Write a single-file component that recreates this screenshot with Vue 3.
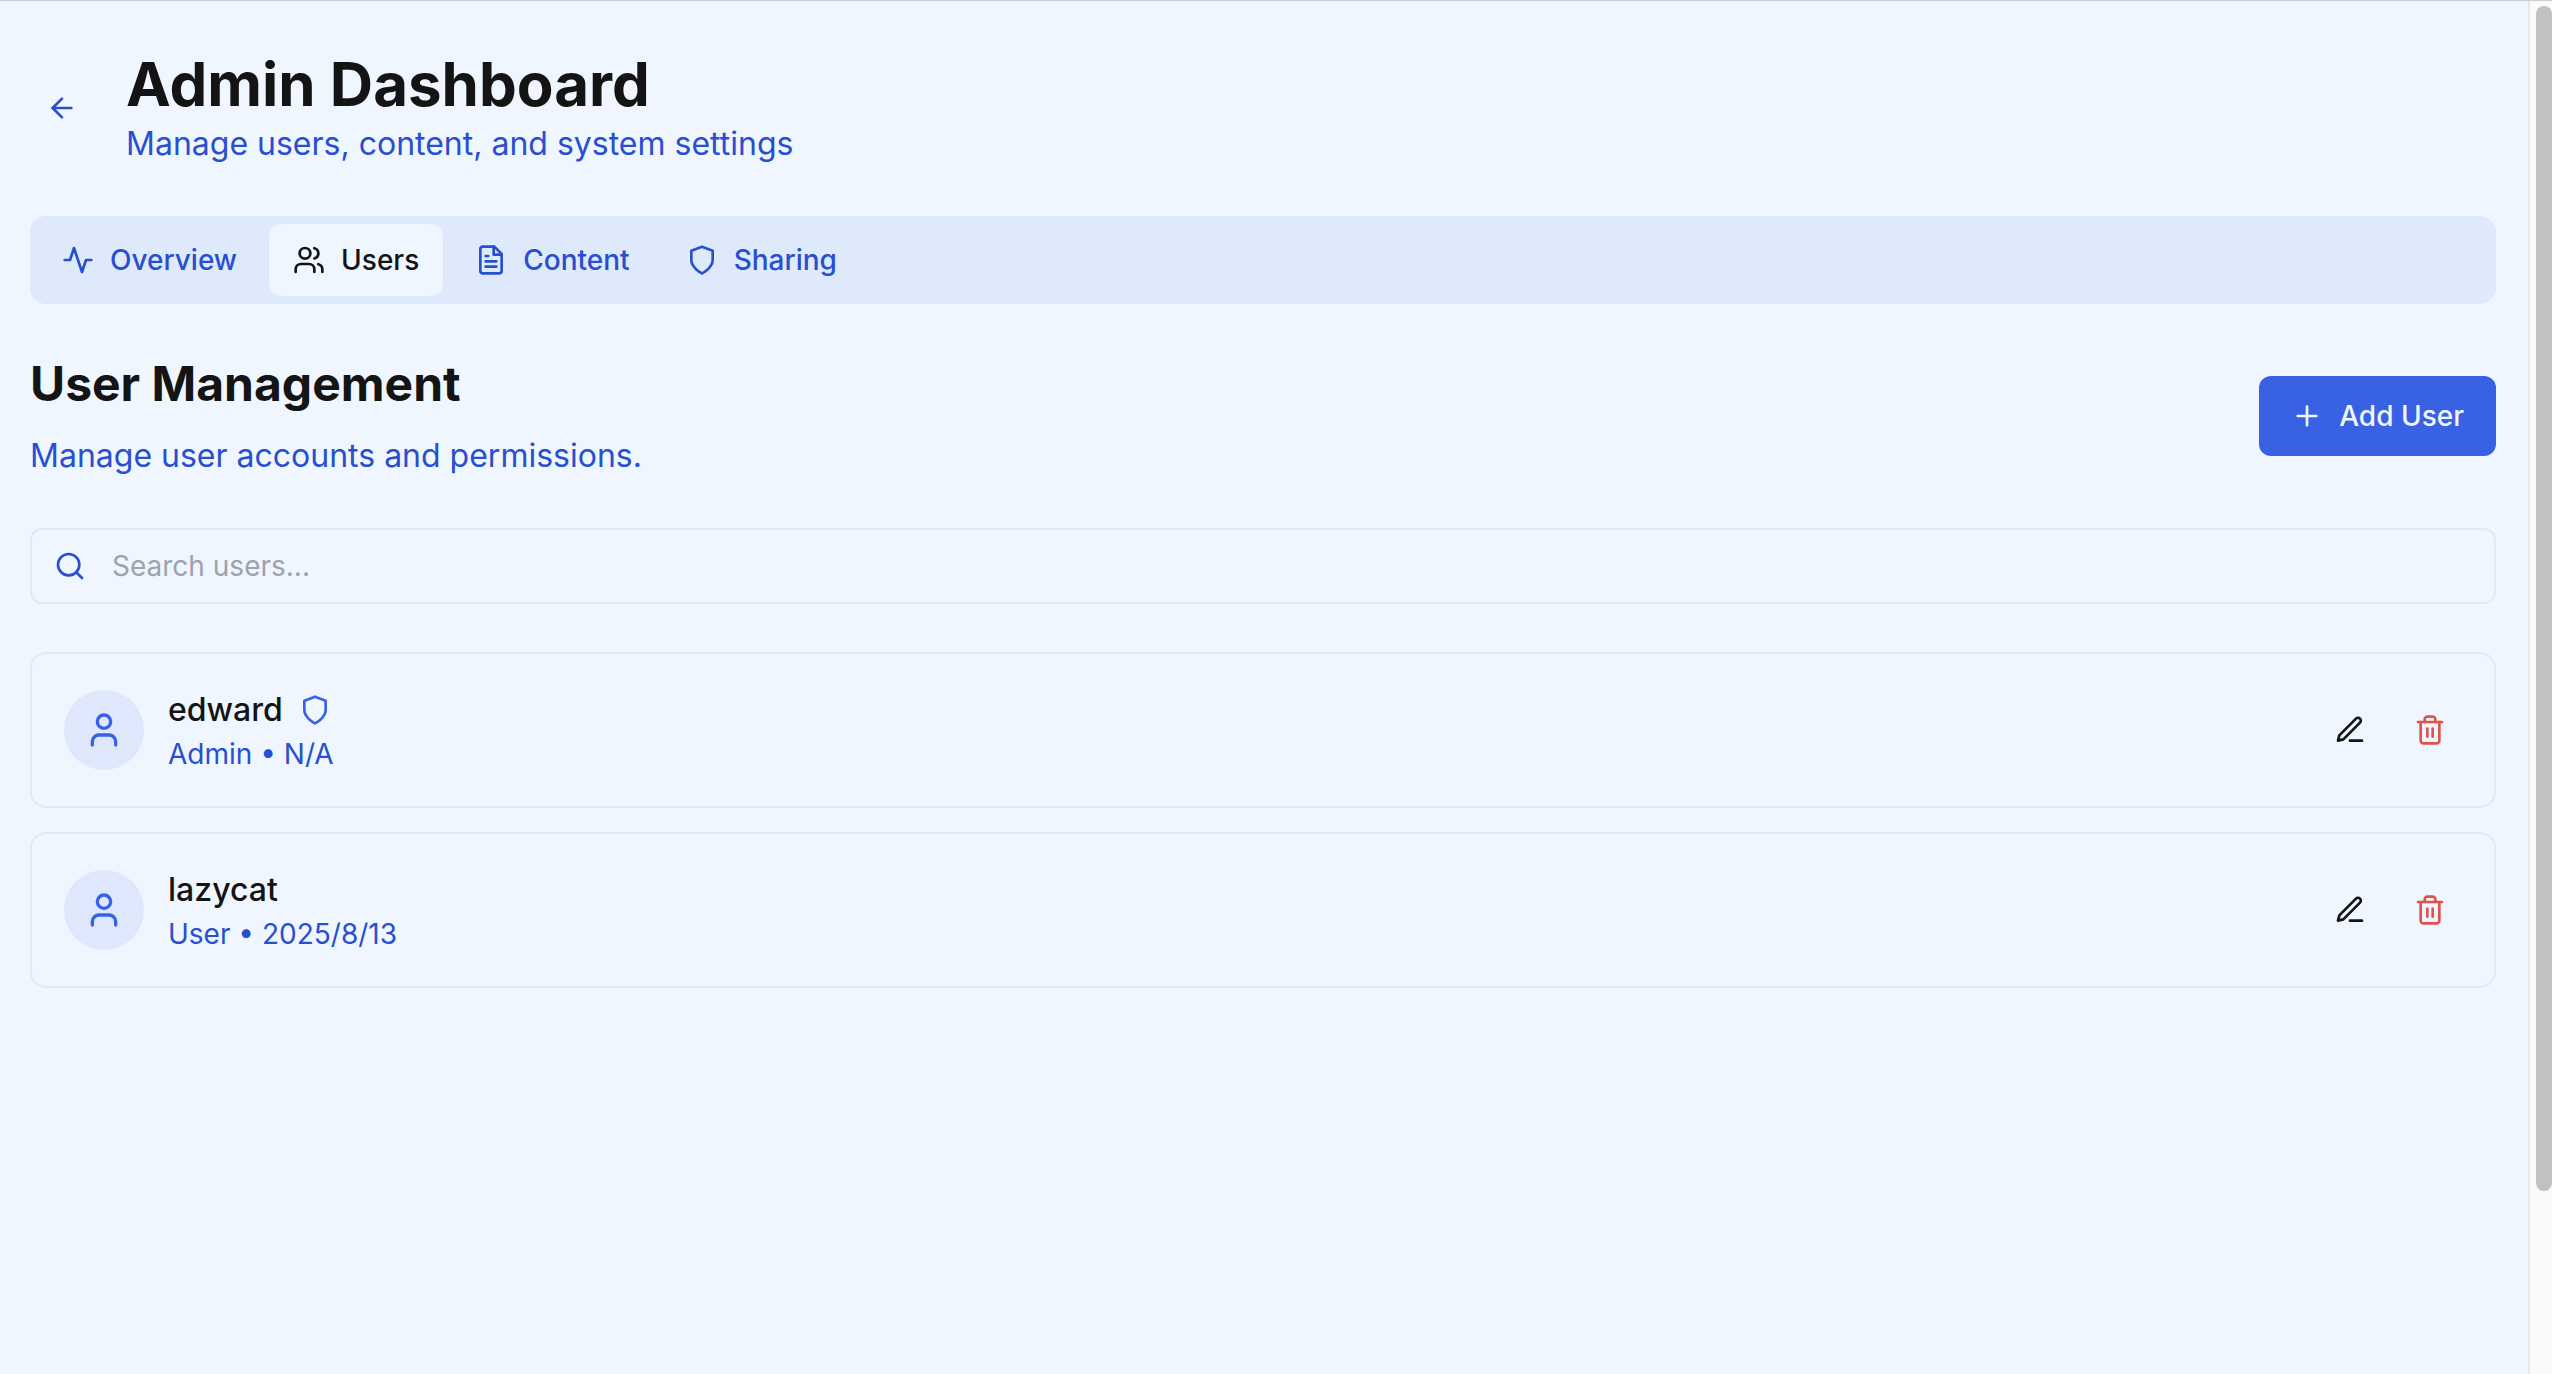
<template>
  <div class="window">
    <main class="page">
      <header class="header">
        <button class="icon-button back" type="button" aria-label="Back">
          <svg class="icon" viewBox="0 0 24 24">
            <path v-for="d in icons.arrowLeft" :key="d" :d="d" />
          </svg>
        </button>
        <div>
          <h1>Admin Dashboard</h1>
          <p class="lead">Manage users, content, and system settings</p>
        </div>
      </header>

      <nav class="tabs">
        <button
          v-for="tab in tabs"
          :key="tab.name"
          class="tab"
          :class="{ active: tab.name === activeTab }"
          type="button"
          @click="activeTab = tab.name"
        >
          <svg class="icon" viewBox="0 0 24 24">
            <path v-for="d in icons[tab.icon]" :key="d" :d="d" />
          </svg>
          {{ tab.name }}
        </button>
      </nav>

      <section class="section-head">
        <div>
          <h2>User Management</h2>
          <p class="lead">Manage user accounts and permissions.</p>
        </div>
        <button class="add" type="button">
          <svg class="icon" viewBox="0 0 24 24">
            <path v-for="d in icons.plus" :key="d" :d="d" />
          </svg>
          Add User
        </button>
      </section>

      <label class="search">
        <svg class="icon" viewBox="0 0 24 24">
          <path v-for="d in icons.search" :key="d" :d="d" />
        </svg>
        <input
          v-model="query"
          type="text"
          placeholder="Search users..."
          aria-label="Search users"
        />
      </label>

      <ul class="users">
        <li v-for="user in filteredUsers" :key="user.name" class="user">
          <div class="avatar">
            <svg class="icon large" viewBox="0 0 24 24">
              <path v-for="d in icons.user" :key="d" :d="d" />
            </svg>
          </div>
          <div class="info">
            <div class="name">
              {{ user.name }}
              <svg v-if="user.role === 'Admin'" class="icon" viewBox="0 0 24 24">
                <path v-for="d in icons.shield" :key="d" :d="d" />
              </svg>
            </div>
            <div class="meta">{{ user.role }} • {{ user.created }}</div>
          </div>
          <div class="actions">
            <button class="icon-button" type="button" aria-label="Edit user">
              <svg class="icon" viewBox="0 0 24 24">
                <path v-for="d in icons.edit" :key="d" :d="d" />
              </svg>
            </button>
            <button
              class="icon-button danger"
              type="button"
              aria-label="Delete user"
              @click="removeUser(user)"
            >
              <svg class="icon" viewBox="0 0 24 24">
                <path v-for="d in icons.trash" :key="d" :d="d" />
              </svg>
            </button>
          </div>
        </li>
      </ul>
    </main>
    <div class="scrollbar">
      <div class="thumb"></div>
    </div>
  </div>
</template>

<script setup>
import { ref, computed } from "vue";

const icons = {
  arrowLeft: ["m12 19-7-7 7-7", "M19 12H5"],
  activity: ["M22 12h-4l-3 9L9 3l-3 9H2"],
  users: [
    "M16 21v-2a4 4 0 0 0-4-4H6a4 4 0 0 0-4 4v2",
    "M5 7a4 4 0 1 0 8 0a4 4 0 1 0-8 0",
    "M22 21v-2a4 4 0 0 0-3-3.87",
    "M16 3.13a4 4 0 0 1 0 7.75",
  ],
  file: [
    "M14.5 2H6a2 2 0 0 0-2 2v16a2 2 0 0 0 2 2h12a2 2 0 0 0 2-2V7.5L14.5 2z",
    "M14 2v6h6",
    "M10 9H8",
    "M16 13H8",
    "M16 17H8",
  ],
  shield: ["M12 22s8-4 8-10V5l-8-3-8 3v7c0 6 8 10 8 10"],
  plus: ["M5 12h14", "M12 5v14"],
  search: ["M3 11a8 8 0 1 0 16 0a8 8 0 1 0-16 0", "m21 21-4.3-4.3"],
  user: [
    "M19 21v-2a4 4 0 0 0-4-4H9a4 4 0 0 0-4 4v2",
    "M8 7a4 4 0 1 0 8 0a4 4 0 1 0-8 0",
  ],
  edit: ["M12 20h9", "M16.5 3.5a2.12 2.12 0 0 1 3 3L7 19l-4 1 1-4Z"],
  trash: [
    "M3 6h18",
    "M19 6v14c0 1-1 2-2 2H7c-1 0-2-1-2-2V6",
    "M8 6V4c0-1 1-2 2-2h4c1 0 2 1 2 2v2",
    "M10 11v6",
    "M14 11v6",
  ],
};

const tabs = [
  { name: "Overview", icon: "activity" },
  { name: "Users", icon: "users" },
  { name: "Content", icon: "file" },
  { name: "Sharing", icon: "shield" },
];

const activeTab = ref("Users");
const query = ref("");
const users = ref([
  { name: "edward", role: "Admin", created: "N/A" },
  { name: "lazycat", role: "User", created: "2025/8/13" },
]);

const filteredUsers = computed(() =>
  users.value.filter((user) => user.name.includes(query.value.trim()))
);

const removeUser = (user) => {
  users.value = users.value.filter((other) => other.name !== user.name);
};
</script>

<style>
body {
  margin: 0;
  background: #eff6ff;
}
</style>

<style scoped>
.window {
  display: flex;
  box-sizing: border-box;
  min-height: 100vh;
  border-top: 1px solid #c8ced6;
  background: #eff6ff;
  color: #141414;
  font-family: Inter, "Liberation Sans", sans-serif;
  font-size: 28px;
  line-height: 40px;
}

.page {
  flex: 1;
  padding: 47px 32px 48px 30px;
}

h1,
h2,
p,
ul {
  margin: 0;
  padding: 0;
}

button,
input {
  font: inherit;
  color: inherit;
  border: 0;
  background: none;
  padding: 0;
}

button {
  cursor: pointer;
}

.icon {
  display: block;
  flex: none;
  width: 32px;
  height: 32px;
  fill: none;
  stroke: currentColor;
  stroke-width: 2;
  stroke-linecap: round;
  stroke-linejoin: round;
}

.icon.large {
  width: 40px;
  height: 40px;
}

.icon-button {
  display: flex;
  align-items: center;
  justify-content: center;
  width: 64px;
  height: 64px;
  border-radius: 12px;
}

.header {
  display: flex;
  align-items: center;
  gap: 32px;
}

.back {
  color: #294fd1;
}

h1 {
  font-size: 60px;
  line-height: 72px;
  font-weight: 700;
}

.lead {
  color: #294fd1;
  font-size: 32px;
  line-height: 48px;
}

.tabs {
  display: flex;
  gap: 8px;
  margin-top: 48px;
  padding: 8px;
  border-radius: 16px;
  background: #dee9fc;
}

.tab {
  display: flex;
  align-items: center;
  gap: 16px;
  padding: 16px 24px;
  border-radius: 12px;
  color: #294fd1;
  font-weight: 500;
}

.tab.active {
  background: #eff6ff;
  color: #141414;
}

.section-head {
  display: flex;
  align-items: center;
  justify-content: space-between;
  margin-top: 48px;
}

h2 {
  margin-bottom: 16px;
  font-size: 48px;
  line-height: 64px;
  font-weight: 700;
}

.add {
  display: flex;
  align-items: center;
  gap: 16px;
  padding: 20px 32px;
  border-radius: 12px;
  background: #3861e4;
  color: #eff6ff;
  font-weight: 500;
}

.search {
  display: flex;
  align-items: center;
  gap: 26px;
  margin-top: 48px;
  padding: 0 22px;
  border: 2px solid #dee9fc;
  border-radius: 12px;
  color: #294fd1;
}

.search input {
  flex: 1;
  height: 72px;
  color: #141414;
  outline: none;
}

.search input::placeholder {
  color: #9ca3af;
}

.users {
  display: flex;
  flex-direction: column;
  gap: 24px;
  margin-top: 48px;
  list-style: none;
}

.user {
  display: flex;
  align-items: center;
  gap: 24px;
  padding: 32px;
  border: 2px solid #dee9fc;
  border-radius: 16px;
}

.avatar {
  display: flex;
  align-items: center;
  justify-content: center;
  width: 80px;
  height: 80px;
  border-radius: 50%;
  background: #dfe7fc;
  color: #3861e4;
}

.info {
  flex: 1;
}

.name {
  display: flex;
  align-items: center;
  gap: 16px;
  font-size: 32px;
  line-height: 48px;
  font-weight: 500;
}

.name .icon {
  color: #3861e4;
}

.meta {
  color: #294fd1;
}

.actions {
  display: flex;
  gap: 16px;
}

.danger {
  color: #e0524a;
}

.scrollbar {
  box-sizing: border-box;
  width: 24px;
  padding: 5px 0 6px 6px;
  border-left: 2px solid #e8e8e8;
  background: #fafafa;
}

.thumb {
  height: 87%;
  border-radius: 8px;
  background: #c1c1c1;
}
</style>
